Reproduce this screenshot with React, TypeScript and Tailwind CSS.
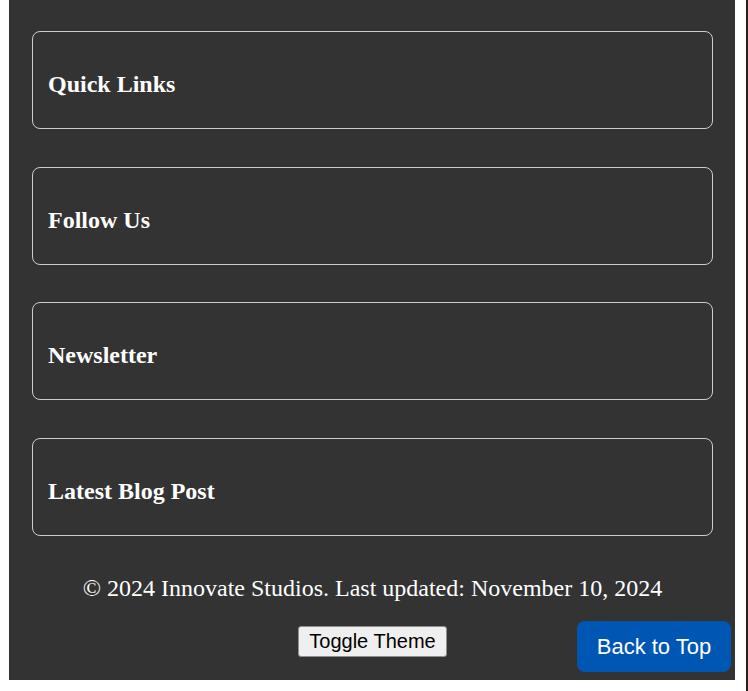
const sections = ['Quick Links', 'Follow Us', 'Newsletter', 'Latest Blog Post']

export default function App() {
  return (
    <div className="flex min-h-[691px] bg-white">
      <footer className="ml-[9px] w-[726px] self-start bg-[#333333] pt-[31px] pb-[23px] pl-[23px] pr-[22px] text-white">
        <div className="flex flex-col gap-[37.7px]">
          {sections.map((title) => (
            <div
              key={title}
              className="h-[98px] rounded-[8px] border border-[#cccccc] px-[15px] pt-[39px]"
            >
              <h2 className="text-[24px] leading-[27px] font-bold" style={{ fontFamily: '"Liberation Serif", serif' }}>
                {title}
              </h2>
            </div>
          ))}
        </div>

        <p
          className="mt-[39px] text-center text-[24px] leading-[27px]"
          style={{ fontFamily: '"Liberation Serif", serif' }}
        >
          © 2024 Innovate Studios. Last updated: November 10, 2024
        </p>

        <div className="mt-[24px] flex justify-center">
          <button
            className="h-[31px] w-[149px] rounded-[3px] border border-[#8f8f8f] bg-[#efefef] text-[20px] leading-[23px] text-black"
            style={{ fontFamily: '"Liberation Sans", Arial, sans-serif' }}
          >
            Toggle Theme
          </button>
        </div>
      </footer>

      <div className="ml-auto w-[2px] bg-[#2b1f1b]" />

      <button
        className="fixed right-[17px] bottom-[19px] flex h-[51px] w-[154px] items-center justify-center rounded-[8px] bg-[#0056b3] text-[22px] text-white"
        style={{ fontFamily: '"Liberation Sans", Arial, sans-serif' }}
      >
        Back to Top
      </button>
    </div>
  )
}
